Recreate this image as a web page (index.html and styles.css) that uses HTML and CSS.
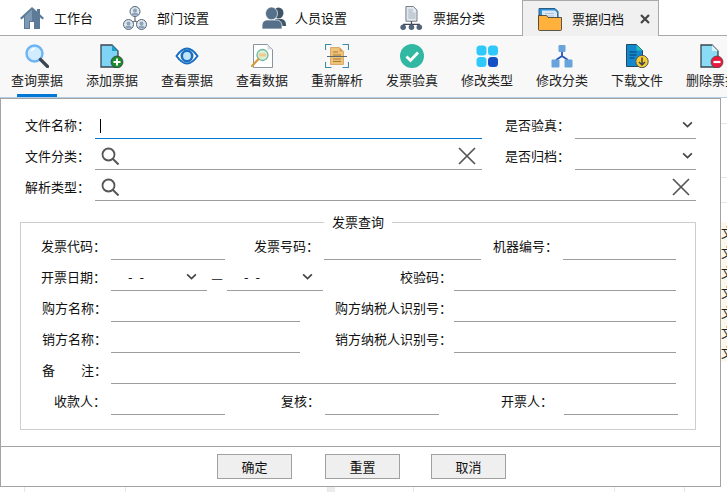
FILE: index.html
```html
<!DOCTYPE html>
<html lang="zh">
<head>
<meta charset="utf-8">
<title>票据归档</title>
<link rel="stylesheet" href="styles.css">
</head>
<body>
<div class="app">
  <nav class="tabs">
    <div class="tab">
      <svg class="tab-icon" viewBox="0 0 24 22"><path fill="#5d7b96" d="M12 0 0 11l1.5 1.6L4 10.4V22h6v-7h4v7h6V10.4l2.500 2.200L24 11l-4-3.700V2h-3v2.500z"/><path fill="#7d99b3" d="M12 2.500 5 9v12h4v-7h3z"/></svg>
      <span>工作台</span>
    </div>
    <div class="tab">
      <svg class="tab-icon" viewBox="0 0 24 24"><g stroke="#555" fill="none"><path d="M12 11v4M12 15 6 18M12 15l6 3"/></g><g fill="#dfe7ee" stroke="#55657a"><circle cx="12" cy="5.500" r="5"/><circle cx="5.500" cy="18.500" r="5"/><circle cx="18.500" cy="18.500" r="5"/></g><g fill="#8da3b8"><circle cx="12" cy="4.500" r="2"/><path d="M8.500 9.500a3.500 3 0 0 1 7 0z"/><circle cx="5.500" cy="17.500" r="2"/><path d="M2 22.500a3.500 3 0 0 1 7 0z"/><circle cx="18.500" cy="17.500" r="2"/><path d="M15 22.500a3.500 3 0 0 1 7 0z"/></g></svg>
      <span>部门设置</span>
    </div>
    <div class="tab tab-tight">
      <svg class="tab-icon" viewBox="0 0 24 22"><g fill="#3f5568"><ellipse cx="16.500" cy="6" rx="5" ry="5.500"/><path d="M13 12h6c3 0 5 2.500 5 6v1h-8z"/></g><g fill="#55708a" stroke="#fff" stroke-width=".7"><ellipse cx="9.500" cy="6.500" rx="6" ry="6.500"/><path d="M4 13h11c3 0 5 3 5 6v3H0v-3c0-3 1-5 4-6z"/></g></svg>
      <span>人员设置</span>
    </div>
    <div class="tab">
      <svg class="tab-icon" viewBox="0 0 24 26"><path fill="#e4e9ef" stroke="#66717d" d="M6.500.5h8l4 4v12h-12z"/><path fill="#c4ccd6" d="M9 3h5v4h3v7H9z"/><path fill="none" stroke="#445" stroke-width="1.300" d="M12.500 16.500V20M4 23v-3h17v3M12.500 20v3"/><g fill="#4f6478"><circle cx="3.500" cy="23" r="3"/><circle cx="12.500" cy="23" r="3"/><circle cx="21" cy="23" r="3"/></g></svg>
      <span>票据分类</span>
    </div>
    <div class="tab tab-active">
      <svg class="tab-icon tab-icon-large" viewBox="0 0 24 24"><path fill="#2f8fd6" stroke="#2a5a86" d="M1 18V1.500h16l3 3V18z"/><path fill="#dce9f4" d="M4 3.500h13l2 2V12H4z"/><path fill="#a9c3da" d="M7 6h9v1H7zM7 8.500h9v1H7z"/><path fill="#ffb13b" stroke="#333" stroke-width=".8" d="M.5 8.500h8l1.500 2h13.500v12a1 1 0 0 1-1 1h-21a1 1 0 0 1-1-1z"/></svg>
      <span>票据归档</span>
      <svg class="tab-close" viewBox="0 0 10 10"><path d="M1 1l8 8M9 1 1 9" stroke="#444" stroke-width="2.200" fill="none"/></svg>
    </div>
  </nav>

  <div class="toolbar">
    <div class="tool tool-active">
      <svg class="tool-icon" viewBox="0 0 24 24"><circle cx="9.500" cy="9.500" r="8" fill="#d2ecff" stroke="#6cb4f5" stroke-width="2.400"/><path d="M6 7a5 5 0 0 1 4-2.500" stroke="#fff" stroke-width="1.500" fill="none"/><path d="m15.500 15.500 7 7" stroke="#3c4650" stroke-width="3.200" stroke-linecap="round"/></svg>
      <span>查询票据</span>
    </div>
    <div class="tool">
      <svg class="tool-icon" viewBox="0 0 24 24"><path fill="#7fd4f5" stroke="#3a4450" stroke-width="1.300" d="M1 1h11l6 6v16H1z"/><path fill="#1c9fc9" d="M12 1v6h6z"/><circle cx="17" cy="18" r="6" fill="#1e8a2e" stroke="#333" stroke-width=".7"/><path d="M17 14.500v7M13.500 18h7" stroke="#fff" stroke-width="2"/></svg>
      <span>添加票据</span>
    </div>
    <div class="tool">
      <svg class="tool-icon" viewBox="0 0 24 24"><path d="M1.500 12C5 7 8.500 4.500 12 4.500S19 7 22.500 12C19 17 15.500 19.500 12 19.500S5 17 1.500 12z" fill="#fff" stroke="#1a6ec0" stroke-width="2"/><circle cx="12" cy="12" r="5.200" fill="#bfe3fb" stroke="#1a6ec0" stroke-width="2.600"/></svg>
      <span>查看票据</span>
    </div>
    <div class="tool">
      <svg class="tool-icon" viewBox="0 0 24 24"><path fill="#fff" stroke="#8a949c" d="M3.500.5h14l5 5v18h-19z"/><path fill="#d5dbe0" d="M17.500.5v5h5z"/><circle cx="12.500" cy="11" r="5.500" fill="#d9f0d6" stroke="#6db7a0" stroke-width="1.300"/><path d="M9 11h7" stroke="#f1c88e" stroke-width="3"/><path d="m8.500 15-6.500 7" stroke="#d99a3a" stroke-width="2.200" stroke-linecap="round"/></svg>
      <span>查看数据</span>
    </div>
    <div class="tool">
      <svg class="tool-icon" viewBox="0 0 24 24"><path d="M.5 6V.5h6M17.500.5h6V6M23.500 18v5.500h-6M6.500 23.500h-6V18" fill="none" stroke="#3f8aa8" stroke-width="1.100"/><path fill="#efc27a" stroke="#c48d38" stroke-width=".6" d="M5.500 3.500h9l4 4v13h-13z"/><path fill="#d9a04e" d="M14.500 3.500v4h4z"/><path d="M8 8h5M8 11h8M8 15h8M8 17.500h8" stroke="#a87a34"/><path d="M2 12.500h20" stroke="#59686f"/></svg>
      <span>重新解析</span>
    </div>
    <div class="tool">
      <svg class="tool-icon" viewBox="0 0 24 24"><circle cx="12" cy="12" r="12" fill="#30b8a2"/><path d="m6.500 12.500 4 4 7.500-8" fill="none" stroke="#fff" stroke-width="2.800"/></svg>
      <span>发票验真</span>
    </div>
    <div class="tool">
      <svg class="tool-icon" viewBox="0 0 24 24"><g fill="#2ec8fb"><rect x="1.500" y="1.500" width="10" height="10" rx="3.500"/><rect x="13" y="1.500" width="10" height="10" rx="3.500"/><rect x="1.500" y="13" width="10" height="10" rx="3.500"/></g><rect x="13" y="13" width="10" height="10" rx="3.500" fill="#154fc6"/></svg>
      <span>修改类型</span>
    </div>
    <div class="tool">
      <svg class="tool-icon" viewBox="0 0 24 24"><path d="M12 8v4M6 16l6-4 6 4" fill="none" stroke="#1f55b8" stroke-width="1.800"/><g fill="#69a3dc"><rect x="8.500" y="1" width="7" height="7" rx="1"/><rect x="1.500" y="15.500" width="8" height="8" rx="1"/><rect x="14.500" y="15.500" width="8" height="8" rx="1"/></g></svg>
      <span>修改分类</span>
    </div>
    <div class="tool">
      <svg class="tool-icon" viewBox="0 0 24 24"><path fill="#1488cf" stroke="#23485f" d="M1.500.5h10l6 6v16h-16z"/><path fill="#27c2b4" d="M11.500.5v6h6z"/><path d="M4.500 8h7M4.500 11h7M4.500 14h5" stroke="#063e66"/><circle cx="17" cy="17.500" r="6.200" fill="#f6cb2e" stroke="#4d5560"/><path d="M17 13.500V21M14 18l3 3 3-3" fill="none" stroke="#3a4450" stroke-width="1.500"/></svg>
      <span>下载文件</span>
    </div>
    <div class="tool">
      <svg class="tool-icon" viewBox="0 0 24 24"><path fill="#8adcf6" stroke="#3a4450" stroke-width="1.300" d="M1 1h11l6 6v16H1z"/><path fill="#d9f3fb" d="M12 1v6h6z"/><circle cx="17" cy="18" r="6" fill="#e8183f" stroke="#444" stroke-width=".7"/><path d="M13.500 18h7" stroke="#fff" stroke-width="2.200"/></svg>
      <span>删除票据</span>
    </div>
  </div>

  <main class="stage">
    <div class="backdrop-strip">
      <div class="strip-row strip-gap-a"></div>
      <div class="strip-row strip-gap-b"></div>
      <div class="strip-row strip-gap-c"></div>
      <div class="strip-cell">文</div>
      <div class="strip-cell">文</div>
      <div class="strip-cell">文</div>
      <div class="strip-cell">文</div>
      <div class="strip-cell">文</div>
      <div class="strip-cell">文</div>
      <div class="strip-cell">文</div>
    </div>
    <div class="backdrop-cols">
      <i></i><i></i><i></i><i class="col-shaded"></i><i></i><i></i><i></i>
    </div>

    <section class="dialog">
      <div class="dialog-body">
        <div class="top-form">
          <label class="top-label">文件名称：</label>
          <div class="line line-focus"><span class="caret"></span></div>
          <label class="top-label top-label-right">是否验真：</label>
          <div class="line line-end">
            <svg class="chev" viewBox="0 0 12 8"><path d="m1 1.500 5 5 5-5" fill="none" stroke="#444" stroke-width="1.900"/></svg>
          </div>

          <label class="top-label">文件分类：</label>
          <div class="line line-lookup">
            <svg class="glass" viewBox="0 0 18 18"><circle cx="7.500" cy="7.500" r="6" fill="none" stroke="#555" stroke-width="1.800"/><path d="m12 12 5.500 5.500" stroke="#555" stroke-width="2"/></svg>
            <svg class="clear" viewBox="0 0 18 18"><path d="m1 1 16 16M17 1 1 17" stroke="#555" stroke-width="1.700" fill="none"/></svg>
          </div>
          <label class="top-label top-label-right">是否归档：</label>
          <div class="line line-end">
            <svg class="chev" viewBox="0 0 12 8"><path d="m1 1.500 5 5 5-5" fill="none" stroke="#444" stroke-width="1.900"/></svg>
          </div>

          <label class="top-label">解析类型：</label>
          <div class="line line-lookup line-span">
            <svg class="glass" viewBox="0 0 18 18"><circle cx="7.500" cy="7.500" r="6" fill="none" stroke="#555" stroke-width="1.800"/><path d="m12 12 5.500 5.500" stroke="#555" stroke-width="2"/></svg>
            <svg class="clear" viewBox="0 0 18 18"><path d="m1 1 16 16M17 1 1 17" stroke="#555" stroke-width="1.700" fill="none"/></svg>
          </div>
        </div>

        <fieldset class="group">
          <legend>发票查询</legend>
          <div class="row row-codes">
            <label class="lab">发票代码：</label><div class="line"></div>
            <label class="lab">发票号码：</label><div class="line"></div>
            <label class="lab">机器编号：</label><div class="line"></div>
          </div>
          <div class="row row-dates">
            <label class="lab">开票日期：</label>
            <div class="line line-date"><span>- -</span><svg class="chev" viewBox="0 0 12 8"><path d="m1 1.500 5 5 5-5" fill="none" stroke="#444" stroke-width="1.900"/></svg></div>
            <span class="dash">—</span>
            <div class="line line-date"><span>- -</span><svg class="chev" viewBox="0 0 12 8"><path d="m1 1.500 5 5 5-5" fill="none" stroke="#444" stroke-width="1.900"/></svg></div>
            <label class="lab lab-tight">校验码：</label><div class="line"></div>
          </div>
          <div class="row row-party">
            <label class="lab lab-near">购方名称：</label><div class="line"></div>
            <label class="lab lab-tight">购方纳税人识别号：</label><div class="line"></div>
          </div>
          <div class="row row-party">
            <label class="lab lab-near">销方名称：</label><div class="line"></div>
            <label class="lab lab-tight">销方纳税人识别号：</label><div class="line"></div>
          </div>
          <div class="row row-note">
            <label class="lab lab-near">备&emsp;&emsp;注：</label><div class="line"></div>
          </div>
          <div class="row row-people">
            <label class="lab">收款人：</label><div class="line"></div>
            <label class="lab">复核：</label><div class="line"></div>
            <label class="lab lab-wide">开票人：</label><div class="line"></div>
          </div>
        </fieldset>
      </div>

      <footer class="dialog-foot">
        <button class="btn" type="button">确定</button>
        <button class="btn" type="button">重置</button>
        <button class="btn" type="button">取消</button>
      </footer>
    </section>
  </main>
</div>
</body>
</html>
```

FILE: styles.css
```css
* { box-sizing: border-box; }

html, body {
  margin: 0;
  height: 100%;
  overflow: hidden;
  background: #fff;
}

body {
  font-family: "Noto Sans CJK SC", "Liberation Sans", sans-serif;
  font-size: 13px;
  line-height: 18px;
  color: #111;
}

.app {
  width: 727px;
  height: 492px;
  display: flex;
  flex-direction: column;
  overflow: hidden;
}

/* tabs */
.tabs {
  height: 36px;
  flex: none;
  display: grid;
  grid-template-columns: 103px 139px 137px 143px 137px;
  border-bottom: 1px solid #a9a9a9;
}

.tab {
  display: flex;
  align-items: center;
  gap: 10px;
  padding-left: 20px;
  height: 35px;
}

.tab-tight { gap: 9px; }

.tab-icon { width: 24px; height: 24px; flex: none; }
.tab-icon-large { width: 24px; height: 24px; }

.tab-active {
  height: 36px;
  padding-left: 15px;
  background: #f0f0f0;
  border: 1px solid #a9a9a9;
  border-bottom: 0;
  position: relative;
}

.tab-close {
  width: 10px;
  height: 10px;
  margin-left: 6px;
}

/* toolbar */
.toolbar {
  height: 62px;
  flex: none;
  display: flex;
  background: #f8f8f8;
  border-bottom: 1px solid #b4cde2;
  overflow: hidden;
}

.tool {
  width: 75px;
  flex: none;
  display: flex;
  flex-direction: column;
  align-items: center;
  padding: 8px 1px 0 0;
  gap: 3px;
  white-space: nowrap;
  color: #222;
  position: relative;
}

.tool-icon { width: 24px; height: 24px; flex: none; }

.tool-active::after {
  content: "";
  width: 40px;
  height: 5px;
  background: #0078d7;
  margin-top: 2px;
}

/* stage */
.stage {
  flex: 1;
  display: grid;
  grid-template-columns: 721px 6px;
  grid-template-rows: 389px 5px;
}

.backdrop-strip {
  grid-column: 2;
  grid-row: 1;
  overflow: hidden;
}

.strip-row { border-bottom: 1px solid #e6e6e6; }
.strip-gap-a { height: 26px; background: #fff; }
.strip-gap-b { height: 54px; }
.strip-gap-c { height: 25px; margin-bottom: 19px; }

.strip-cell {
  height: 20px;
  line-height: 20px;
  background: #fdf8ec;
  color: #222;
  white-space: nowrap;
}

.backdrop-cols {
  grid-column: 1 / -1;
  grid-row: 2;
  display: grid;
  grid-template-columns: 25px 101px 202px 35px 51px 201px 70px;
}

.backdrop-cols i { border-right: 1px solid #e8e8e8; }
.backdrop-cols .col-shaded { background: linear-gradient(90deg, #ececec 7px, transparent 7px); border-right: 0; }

/* dialog */
.dialog {
  grid-column: 1;
  grid-row: 1;
  background: #fff;
  border: 1px solid #a3a3a3;
  display: flex;
  flex-direction: column;
}

.dialog-body {
  flex: 1;
  padding-top: 9px;
}

.top-form {
  display: grid;
  grid-template-columns: 94px 387px 93px 121px;
  grid-auto-rows: 31px;
}

.top-label {
  padding-left: 24px;
  padding-top: 8px;
}

.top-label-right { padding-left: 23px; }

.line {
  border-bottom: 1px solid #9d9d9d;
  display: flex;
  align-items: center;
  min-width: 0;
}

.line-focus {
  border-bottom-color: #0078d7;
  padding-left: 5px;
}

.caret {
  width: 1px;
  height: 14px;
  background: #000;
  margin-top: 5px;
}

.line-end {
  justify-content: flex-end;
  padding-right: 3px;
  padding-top: 3px;
}

.chev { width: 11px; height: 7px; flex: none; }

.line-lookup {
  justify-content: space-between;
  padding: 4px 6px 0 6px;
}

.line-span { grid-column: 2 / 5; }

.glass, .clear { width: 18px; height: 18px; flex: none; }

/* group */
.group {
  margin: 14px 0 0 19px;
  padding: 0;
  width: 676px;
  height: 215px;
  border: 1px solid #cdcdcd;
  min-width: 0;
}

.group legend {
  margin: 0 auto;
  padding: 0 8px;
  line-height: 14px;
}

.row {
  display: grid;
  height: 31px;
}

.row-codes { grid-template-columns: 90px 114px 99px 157px 82px 113px; }
.row-dates { grid-template-columns: 90px 96px 20px 96px 131px 222px; }
.row-party { grid-template-columns: 90px 189px 154px 222px; }
.row-note { grid-template-columns: 90px 565px; }
.row-people { grid-template-columns: 90px 114px 100px 114px 125px 114px; }

.lab {
  text-align: right;
  padding: 8px 5px 0 0;
  white-space: nowrap;
}

.lab-tight { padding-right: 2px; }
.lab-near { padding-right: 4px; }
.lab-wide { padding-right: 11px; }

.line-date {
  justify-content: space-between;
  padding: 3px 10px 0 17px;
}

.line-date span { line-height: 18px; word-spacing: 4px; }

.dash {
  text-align: center;
  padding-top: 9px;
}

/* footer */
.dialog-foot {
  height: 40px;
  flex: none;
  border-top: 1px solid #a3a3a3;
  display: grid;
  grid-template-columns: 108px 106px 75px;
  padding: 7px 0 0 216px;
  align-items: start;
}

.btn {
  width: 75px;
  height: 25px;
  padding: 0;
  font: inherit;
  color: #111;
  background: #efefef;
  border: 1px solid #a0a0a0;
  border-radius: 0;
}
```
